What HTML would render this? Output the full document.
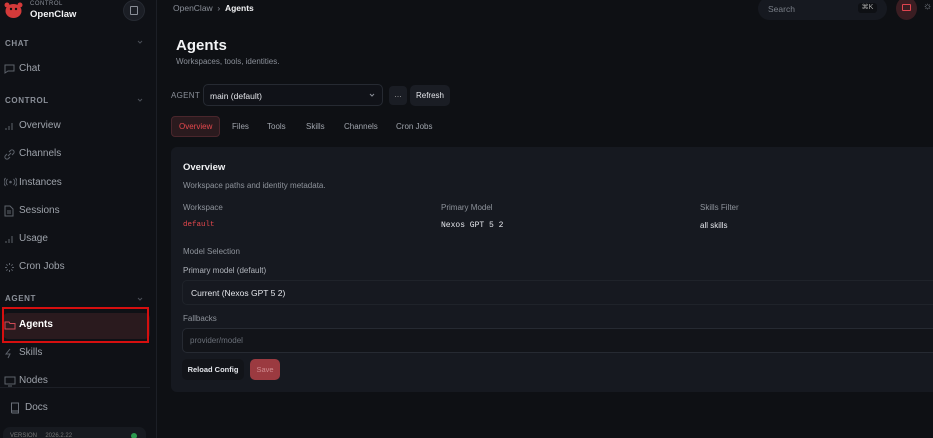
<!DOCTYPE html>
<html><head><meta charset="utf-8"><style>
*{margin:0;padding:0;box-sizing:border-box}
html,body{width:933px;height:438px;overflow:hidden}
body{background:#0e1014;font-family:"Liberation Sans",sans-serif;color:#e4e6eb;position:relative}
.a{position:absolute;white-space:nowrap}
#sb{position:absolute;left:0;top:0;width:157px;height:438px;background:#0f1116;border-right:1px solid #1c1f26}
.sec{font-size:8px;font-weight:bold;color:#8a8f98;letter-spacing:.6px;left:5px}
.nav{left:19px;font-size:10px;color:#9ea3ab}
.lab{font-size:8px;color:#8e939b}
svg.i{position:absolute;left:4px}
</style></head><body>
<div id="sb">
 <svg class="a" style="left:3px;top:2px" width="21" height="17" viewBox="0 0 21 17"><ellipse cx="10.5" cy="9" rx="8" ry="7" fill="#d33a3a"/><circle cx="4" cy="3" r="2.5" fill="#d33a3a"/><circle cx="17" cy="3" r="2.5" fill="#d33a3a"/><circle cx="8" cy="7" r="1.2" fill="#111"/><circle cx="13" cy="7" r="1.2" fill="#111"/></svg>
 <div class="a" style="left:30px;top:1px;font-size:6px;color:#8a8f98;letter-spacing:.5px">CONTROL</div>
 <div class="a" style="left:30px;top:9px;font-size:9.5px;font-weight:bold;color:#f2f3f5">OpenClaw</div>
 <div class="a" style="left:123px;top:0;width:22px;height:21px;border-radius:50%;background:#1b1e25;border:1px solid #262a32"></div>
 <div class="a" style="left:130px;top:6px;width:8px;height:9px;border:1px solid #8a8f98;border-radius:1px"></div>
 <svg class="a" style="left:137px;top:40px" width="6" height="4"><path d="M1 1l2 2 2-2" stroke="#4a4e57" fill="none"/></svg>
 <svg class="a" style="left:137px;top:98px" width="6" height="4"><path d="M1 1l2 2 2-2" stroke="#4a4e57" fill="none"/></svg>
 <svg class="a" style="left:137px;top:297px" width="6" height="4"><path d="M1 1l2 2 2-2" stroke="#4a4e57" fill="none"/></svg>
 <div class="a sec" style="top:39px">CHAT</div>
 <svg class="i" style="top:64px" width="11" height="10"><path d="M1 1h9v6H4l-3 2z" stroke="#5d626b" fill="none"/></svg><div class="a nav" style="top:63px">Chat</div>
 <div class="a sec" style="top:96px">CONTROL</div>
 <svg class="i" style="top:121px" width="10" height="10"><path d="M2 9v-2M5 9V5M8 9V2" stroke="#5d626b"/></svg><div class="a nav" style="top:120px">Overview</div>
 <svg class="i" style="top:149px" width="11" height="11"><path d="M4 7l3-3M3 5L1.5 6.5a2 2 0 003 3L6 8M8 6l1.5-1.5a2 2 0 00-3-3L5 3" stroke="#5d626b" fill="none"/></svg><div class="a nav" style="top:148px">Channels</div>
 <svg class="i" style="top:177px" width="13" height="10"><circle cx="6.5" cy="5" r="1.3" fill="#5d626b"/><path d="M3.5 2a4 4 0 000 6M9.5 2a4 4 0 010 6M1.5 1a6 6 0 000 8M11.5 1a6 6 0 010 8" stroke="#5d626b" fill="none"/></svg><div class="a nav" style="top:177px">Instances</div>
 <svg class="i" style="top:205px" width="10" height="12"><path d="M1 1h5l3 3v7H1z M3 6h4M3 8h4" stroke="#5d626b" fill="none"/></svg><div class="a nav" style="top:205px">Sessions</div>
 <svg class="i" style="top:234px" width="10" height="10"><path d="M2 9v-2M5 9V5M8 9V2" stroke="#5d626b"/></svg><div class="a nav" style="top:233px">Usage</div>
 <svg class="i" style="top:262px" width="11" height="11"><path d="M5.5 1v2M5.5 8v2M1 5.5h2M8 5.5h2M2.3 2.3l1.4 1.4M7.3 7.3l1.4 1.4M2.3 8.7l1.4-1.4M7.3 3.7l1.4-1.4" stroke="#5d626b"/></svg><div class="a nav" style="top:261px">Cron Jobs</div>
 <div class="a sec" style="top:294px">AGENT</div>
 <div class="a" style="left:3px;top:313px;width:147px;height:26px;background:#2a1a1e;border-radius:5px"></div>
 <div class="a" style="left:2px;top:307px;width:147px;height:36px;border:2px solid #d60f0f"></div>
 <svg class="i" style="top:320px" width="12" height="10"><path d="M1 2h4l1 1.5h5V9H1z" stroke="#d04a55" fill="none"/></svg><div class="a nav" style="top:319px;color:#fff;font-weight:bold">Agents</div>
 <svg class="i" style="top:348px" width="10" height="11"><path d="M6 1L2 6h4l-2 4" stroke="#5d626b" fill="none"/></svg><div class="a nav" style="top:347px">Skills</div>
 <svg class="i" style="top:376px" width="12" height="11"><path d="M1 1h10v7H1zM4 10h4" stroke="#5d626b" fill="none"/></svg><div class="a nav" style="top:375px">Nodes</div>
 <div class="a" style="left:0;top:387px;width:150px;height:1px;background:#1c1f26"></div>
 <svg class="a" style="left:10px;top:402px" width="10" height="12"><path d="M1.5 1h7v10h-6a1 1 0 01-1-1zM1.5 9h7" stroke="#6a6f78" fill="none"/></svg><div class="a nav" style="left:25px;top:402px">Docs</div>
 <div class="a" style="left:3px;top:427px;width:143px;height:20px;background:#171a20;border-radius:7px"></div>
 <div class="a" style="left:10px;top:433px;font-size:6px;color:#777">VERSION&nbsp;&nbsp;&nbsp;&nbsp;&nbsp;2026.2.22</div>
 <div class="a" style="left:131px;top:433px;width:6px;height:6px;border-radius:50%;background:#2c9a4e"></div>
</div>
<div class="a" style="left:173px;top:3px;font-size:8.5px;color:#8a8f98">OpenClaw &nbsp;›&nbsp; <b style="color:#f2f3f5">Agents</b></div>
<div class="a" style="left:758px;top:-3px;width:129px;height:23px;background:#161920;border-radius:12px"></div>
<div class="a" style="left:768px;top:4px;font-size:8.5px;color:#7a7f88">Search</div>
<div class="a" style="left:858px;top:3px;width:19px;height:10px;background:#0e1014;border-radius:3px;font-size:7px;color:#aaa;text-align:center;line-height:10px">⌘K</div>
<div class="a" style="left:896px;top:-3px;width:21px;height:23px;border-radius:50%;background:#3a1d22"></div>
<div class="a" style="left:902px;top:4px;width:9px;height:7px;border:1.5px solid #e0444f;border-radius:1px"></div>
<div class="a" style="left:923px;top:1px;font-size:10px;color:#8a8f98">☼</div>
<div class="a" style="left:176px;top:37px;font-size:15px;font-weight:bold;color:#f2f3f5">Agents</div>
<div class="a" style="left:176px;top:57px;font-size:8px;color:#8a8f98">Workspaces, tools, identities.</div>
<div class="a" style="left:171px;top:91px;font-size:8px;color:#8a8f98;letter-spacing:.3px">AGENT</div>
<div class="a" style="left:203px;top:84px;width:180px;height:22px;background:#101218;border:1px solid #262a32;border-radius:5px"></div>
<div class="a" style="left:210px;top:91px;font-size:8.5px;color:#e4e6eb">main (default)</div>
<svg class="a" style="left:369px;top:93px" width="6" height="4"><path d="M1 1l2 2 2-2" stroke="#8a8f98" fill="none"/></svg>
<div class="a" style="left:389px;top:86px;width:18px;height:19px;background:#1a1d24;border-radius:4px;font-size:8px;color:#aaa;text-align:center;line-height:17px">…</div>
<div class="a" style="left:410px;top:85px;width:40px;height:21px;background:#1a1d24;border-radius:5px;font-size:8px;color:#e4e6eb;text-align:center;line-height:21px">Refresh</div>
<div class="a" style="left:171px;top:116px;width:49px;height:21px;background:#2a1a1e;border:1px solid #4a262c;border-radius:4px"></div>
<div class="a" style="left:179px;top:122px;font-size:8px;color:#e5484d">Overview</div>
<div class="a" style="left:232px;top:122px;font-size:8px;color:#a0a5ad">Files</div>
<div class="a" style="left:267px;top:122px;font-size:8px;color:#a0a5ad">Tools</div>
<div class="a" style="left:306px;top:122px;font-size:8px;color:#a0a5ad">Skills</div>
<div class="a" style="left:344px;top:122px;font-size:8px;color:#a0a5ad">Channels</div>
<div class="a" style="left:396px;top:122px;font-size:8px;color:#a0a5ad">Cron Jobs</div>
<div class="a" style="left:171px;top:147px;width:780px;height:245px;background:#161920;border-radius:6px"></div>
<div class="a" style="left:183px;top:162px;font-size:9.5px;font-weight:bold;color:#f2f3f5">Overview</div>
<div class="a lab" style="left:183px;top:181px">Workspace paths and identity metadata.</div>
<div class="a lab" style="left:183px;top:203px">Workspace</div>
<div class="a lab" style="left:441px;top:203px">Primary Model</div>
<div class="a lab" style="left:700px;top:203px">Skills Filter</div>
<div class="a" style="left:183px;top:221px;font-size:7.5px;font-family:'Liberation Mono',monospace;color:#e5484d">default</div>
<div class="a" style="left:441px;top:221px;font-size:8px;font-family:'Liberation Mono',monospace;color:#e4e6eb">Nexos GPT 5 2</div>
<div class="a" style="left:700px;top:221px;font-size:8px;color:#e4e6eb">all skills</div>
<div class="a lab" style="left:183px;top:247px">Model Selection</div>
<div class="a" style="left:183px;top:266px;font-size:8px;color:#b0b4bb">Primary model (default)</div>
<div class="a" style="left:182px;top:280px;width:760px;height:25px;background:#161920;border:1px solid #1f232a;border-radius:5px"></div>
<div class="a" style="left:191px;top:288px;font-size:8.5px;color:#e4e6eb">Current (Nexos GPT 5 2)</div>
<div class="a lab" style="left:183px;top:314px">Fallbacks</div>
<div class="a" style="left:182px;top:328px;width:760px;height:25px;background:#121419;border:1px solid #262a32;border-radius:5px"></div>
<div class="a" style="left:190px;top:336px;font-size:8px;color:#6a6f78">provider/model</div>
<div class="a" style="left:182px;top:359px;width:62px;height:21px;background:#121419;border-radius:5px;font-size:7.5px;font-weight:bold;color:#e4e6eb;text-align:center;line-height:21px">Reload Config</div>
<div class="a" style="left:250px;top:359px;width:30px;height:21px;background:#9b3a40;border-radius:5px;font-size:7.5px;color:#d08a8e;text-align:center;line-height:21px">Save</div>
</body></html>
